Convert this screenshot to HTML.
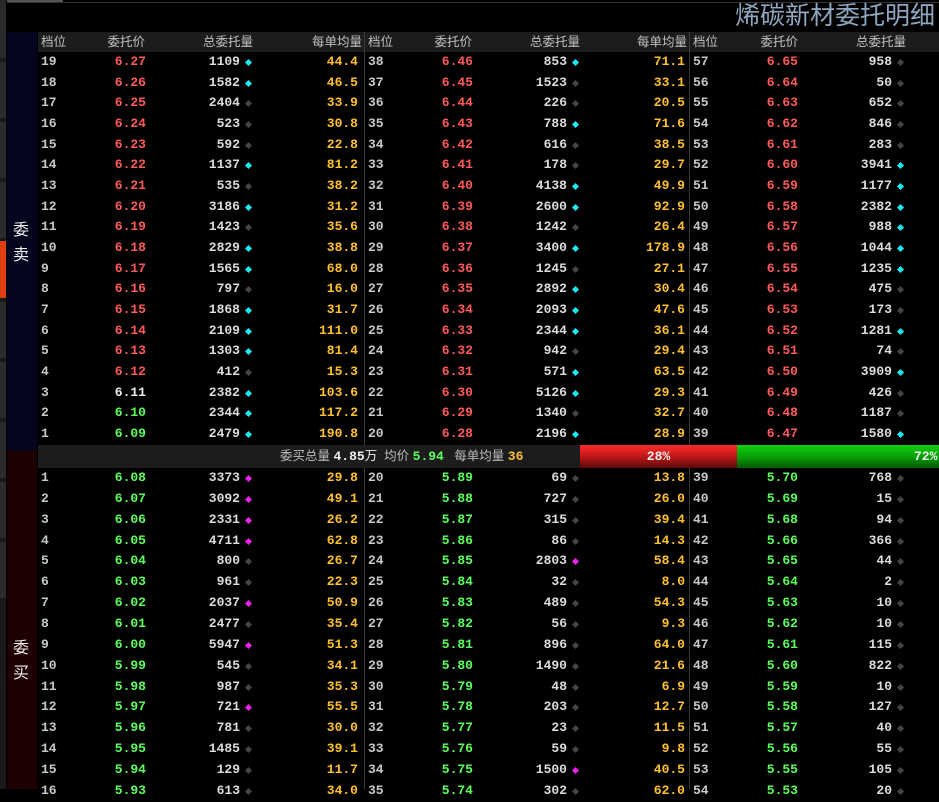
<!DOCTYPE html>
<html><head><meta charset="utf-8"><style>
*{margin:0;padding:0;box-sizing:border-box}
html,body{width:939px;height:789px}
body{background:#000;overflow:hidden;position:relative;font-family:"Liberation Sans","Noto Sans CJK SC",sans-serif;color:#ccc}
.abs{position:absolute}
.g{position:absolute;width:326px}
.r{position:relative;height:20.67px;font:bold 13px/20.67px "Liberation Mono",monospace}
.b .r{height:20.86px;line-height:20.86px}
.r span{position:absolute;top:0;white-space:nowrap}
.p{left:3px;color:#c8c8c8}
.pr{right:218px;color:#ff5a5a}
.G .pr{color:#5cff5c}
.t{right:124px;color:#dcdcdc}
.a{right:6px;color:#ffc030}
.r i{position:absolute;left:208px;top:8px;width:5px;height:5px;transform:rotate(45deg);background:#444}
.r i.c{background:#1ee8f0}
.r i.m{background:#f020f0}
.hd{position:absolute;top:32px;height:20px;background:#1c1c1c;left:38px;width:901px;font-size:12.5px;line-height:20px;color:#c0c0c0}
.hd span{position:absolute}
.vl{position:absolute;width:1px;background:#3a3a3a}
</style></head><body>
<div class="abs" style="left:0;top:0;width:6px;height:789px;background:#1a1a1a"></div>
<div class="abs" style="left:0;top:0;width:6px;height:58px;background:#2a2a2a"></div>
<div class="abs" style="left:0;top:62px;width:6px;height:56px;background:#2a2a2a"></div>
<div class="abs" style="left:0;top:122px;width:6px;height:56px;background:#2a2a2a"></div>
<div class="abs" style="left:0;top:182px;width:6px;height:56px;background:#2a2a2a"></div>
<div class="abs" style="left:0;top:241px;width:6px;height:57px;background:#e04010"></div>
<div class="abs" style="left:0;top:302px;width:6px;height:56px;background:#2a2a2a"></div>
<div class="abs" style="left:0;top:362px;width:6px;height:56px;background:#2a2a2a"></div>
<div class="abs" style="left:0;top:422px;width:6px;height:56px;background:#2a2a2a"></div>
<div class="abs" style="left:0;top:482px;width:6px;height:56px;background:#2a2a2a"></div>
<div class="abs" style="left:0;top:542px;width:6px;height:56px;background:#2a2a2a"></div>
<div class="abs" style="left:7px;top:0;width:56px;height:2px;background:#555"></div>
<div class="abs" style="left:7px;top:2px;width:932px;height:1px;background:#333"></div>
<div class="abs" style="right:4px;top:2px;font-size:25px;line-height:28px;color:#8ea6bf">烯碳新材委托明细</div>
<div class="abs" style="left:7px;top:32px;width:30px;height:419px;background:#05051e"></div>
<div class="abs" style="left:7px;top:451px;width:30px;height:338px;background:#1e0000"></div>
<div class="abs" style="left:13px;top:218px;font-size:16px;line-height:25px;color:#eee;width:18px">委<br>卖</div>
<div class="abs" style="left:13px;top:636px;font-size:16px;line-height:25px;color:#eee;width:18px">委<br>买</div>
<div class="hd">
<span style="left:3px">档位</span><span style="right:794px">委托价</span><span style="right:686px">总委托量</span><span style="right:577px">每单均量</span>
<span style="left:330px">档位</span><span style="right:467px">委托价</span><span style="right:359px">总委托量</span><span style="right:252px">每单均量</span>
<span style="left:655px">档位</span><span style="right:141px">委托价</span><span style="right:33px">总委托量</span>
</div>
<div class="vl" style="left:364px;top:32px;height:413px"></div>
<div class="vl" style="left:689px;top:32px;height:413px"></div>
<div class="vl" style="left:364px;top:467px;height:322px"></div>
<div class="vl" style="left:689px;top:467px;height:322px"></div>
<div class="g" style="left:38px;top:52px">
<div class="r"><span class="p">19</span><span class="pr">6.27</span><span class="t">1109</span><i class="c"></i><span class="a">44.4</span></div>
<div class="r"><span class="p">18</span><span class="pr">6.26</span><span class="t">1582</span><i class="c"></i><span class="a">46.5</span></div>
<div class="r"><span class="p">17</span><span class="pr">6.25</span><span class="t">2404</span><i></i><span class="a">33.9</span></div>
<div class="r"><span class="p">16</span><span class="pr">6.24</span><span class="t">523</span><i></i><span class="a">30.8</span></div>
<div class="r"><span class="p">15</span><span class="pr">6.23</span><span class="t">592</span><i></i><span class="a">22.8</span></div>
<div class="r"><span class="p">14</span><span class="pr">6.22</span><span class="t">1137</span><i class="c"></i><span class="a">81.2</span></div>
<div class="r"><span class="p">13</span><span class="pr">6.21</span><span class="t">535</span><i></i><span class="a">38.2</span></div>
<div class="r"><span class="p">12</span><span class="pr">6.20</span><span class="t">3186</span><i class="c"></i><span class="a">31.2</span></div>
<div class="r"><span class="p">11</span><span class="pr">6.19</span><span class="t">1423</span><i></i><span class="a">35.6</span></div>
<div class="r"><span class="p">10</span><span class="pr">6.18</span><span class="t">2829</span><i class="c"></i><span class="a">38.8</span></div>
<div class="r"><span class="p">9</span><span class="pr">6.17</span><span class="t">1565</span><i class="c"></i><span class="a">68.0</span></div>
<div class="r"><span class="p">8</span><span class="pr">6.16</span><span class="t">797</span><i></i><span class="a">16.0</span></div>
<div class="r"><span class="p">7</span><span class="pr">6.15</span><span class="t">1868</span><i class="c"></i><span class="a">31.7</span></div>
<div class="r"><span class="p">6</span><span class="pr">6.14</span><span class="t">2109</span><i class="c"></i><span class="a">111.0</span></div>
<div class="r"><span class="p">5</span><span class="pr">6.13</span><span class="t">1303</span><i class="c"></i><span class="a">81.4</span></div>
<div class="r"><span class="p">4</span><span class="pr">6.12</span><span class="t">412</span><i></i><span class="a">15.3</span></div>
<div class="r"><span class="p">3</span><span class="pr" style="color:#eee">6.11</span><span class="t">2382</span><i class="c"></i><span class="a">103.6</span></div>
<div class="r"><span class="p">2</span><span class="pr" style="color:#5cff5c">6.10</span><span class="t">2344</span><i class="c"></i><span class="a">117.2</span></div>
<div class="r"><span class="p">1</span><span class="pr" style="color:#5cff5c">6.09</span><span class="t">2479</span><i class="c"></i><span class="a">190.8</span></div>
</div>
<div class="g" style="left:365px;top:52px">
<div class="r"><span class="p">38</span><span class="pr">6.46</span><span class="t">853</span><i class="c"></i><span class="a">71.1</span></div>
<div class="r"><span class="p">37</span><span class="pr">6.45</span><span class="t">1523</span><i></i><span class="a">33.1</span></div>
<div class="r"><span class="p">36</span><span class="pr">6.44</span><span class="t">226</span><i></i><span class="a">20.5</span></div>
<div class="r"><span class="p">35</span><span class="pr">6.43</span><span class="t">788</span><i class="c"></i><span class="a">71.6</span></div>
<div class="r"><span class="p">34</span><span class="pr">6.42</span><span class="t">616</span><i></i><span class="a">38.5</span></div>
<div class="r"><span class="p">33</span><span class="pr">6.41</span><span class="t">178</span><i></i><span class="a">29.7</span></div>
<div class="r"><span class="p">32</span><span class="pr">6.40</span><span class="t">4138</span><i class="c"></i><span class="a">49.9</span></div>
<div class="r"><span class="p">31</span><span class="pr">6.39</span><span class="t">2600</span><i class="c"></i><span class="a">92.9</span></div>
<div class="r"><span class="p">30</span><span class="pr">6.38</span><span class="t">1242</span><i></i><span class="a">26.4</span></div>
<div class="r"><span class="p">29</span><span class="pr">6.37</span><span class="t">3400</span><i class="c"></i><span class="a">178.9</span></div>
<div class="r"><span class="p">28</span><span class="pr">6.36</span><span class="t">1245</span><i></i><span class="a">27.1</span></div>
<div class="r"><span class="p">27</span><span class="pr">6.35</span><span class="t">2892</span><i class="c"></i><span class="a">30.4</span></div>
<div class="r"><span class="p">26</span><span class="pr">6.34</span><span class="t">2093</span><i class="c"></i><span class="a">47.6</span></div>
<div class="r"><span class="p">25</span><span class="pr">6.33</span><span class="t">2344</span><i class="c"></i><span class="a">36.1</span></div>
<div class="r"><span class="p">24</span><span class="pr">6.32</span><span class="t">942</span><i></i><span class="a">29.4</span></div>
<div class="r"><span class="p">23</span><span class="pr">6.31</span><span class="t">571</span><i class="c"></i><span class="a">63.5</span></div>
<div class="r"><span class="p">22</span><span class="pr">6.30</span><span class="t">5126</span><i class="c"></i><span class="a">29.3</span></div>
<div class="r"><span class="p">21</span><span class="pr">6.29</span><span class="t">1340</span><i></i><span class="a">32.7</span></div>
<div class="r"><span class="p">20</span><span class="pr">6.28</span><span class="t">2196</span><i class="c"></i><span class="a">28.9</span></div>
</div>
<div class="g" style="left:690px;top:52px">
<div class="r"><span class="p">57</span><span class="pr">6.65</span><span class="t">958</span><i></i></div>
<div class="r"><span class="p">56</span><span class="pr">6.64</span><span class="t">50</span><i></i></div>
<div class="r"><span class="p">55</span><span class="pr">6.63</span><span class="t">652</span><i></i></div>
<div class="r"><span class="p">54</span><span class="pr">6.62</span><span class="t">846</span><i></i></div>
<div class="r"><span class="p">53</span><span class="pr">6.61</span><span class="t">283</span><i></i></div>
<div class="r"><span class="p">52</span><span class="pr">6.60</span><span class="t">3941</span><i class="c"></i></div>
<div class="r"><span class="p">51</span><span class="pr">6.59</span><span class="t">1177</span><i class="c"></i></div>
<div class="r"><span class="p">50</span><span class="pr">6.58</span><span class="t">2382</span><i class="c"></i></div>
<div class="r"><span class="p">49</span><span class="pr">6.57</span><span class="t">988</span><i class="c"></i></div>
<div class="r"><span class="p">48</span><span class="pr">6.56</span><span class="t">1044</span><i class="c"></i></div>
<div class="r"><span class="p">47</span><span class="pr">6.55</span><span class="t">1235</span><i class="c"></i></div>
<div class="r"><span class="p">46</span><span class="pr">6.54</span><span class="t">475</span><i></i></div>
<div class="r"><span class="p">45</span><span class="pr">6.53</span><span class="t">173</span><i></i></div>
<div class="r"><span class="p">44</span><span class="pr">6.52</span><span class="t">1281</span><i class="c"></i></div>
<div class="r"><span class="p">43</span><span class="pr">6.51</span><span class="t">74</span><i></i></div>
<div class="r"><span class="p">42</span><span class="pr">6.50</span><span class="t">3909</span><i class="c"></i></div>
<div class="r"><span class="p">41</span><span class="pr">6.49</span><span class="t">426</span><i></i></div>
<div class="r"><span class="p">40</span><span class="pr">6.48</span><span class="t">1187</span><i></i></div>
<div class="r"><span class="p">39</span><span class="pr">6.47</span><span class="t">1580</span><i class="c"></i></div>
</div>
<div class="abs" style="left:38px;top:445px;width:542px;height:23px;background:#1c1c1c;font-size:12.5px;line-height:23px;color:#bbb">
<span class="abs" style="left:242px">委买总量 <b style="color:#eee;font:bold 13px 'Liberation Mono',monospace">4.85</b><span style="color:#eee">万</span>&nbsp; 均价 <b style="color:#5cff5c;font:bold 13px 'Liberation Mono',monospace">5.94</b>&nbsp;&nbsp; 每单均量 <b style="color:#ffc030;font:bold 13px 'Liberation Mono',monospace">36</b></span>
</div>
<div class="abs" style="left:580px;top:445px;width:157px;height:23px;background:linear-gradient(#ff2a2a,#c01818 50%,#5a0808);color:#eee;font:bold 13px/23px 'Liberation Mono',monospace;text-align:center">28%</div>
<div class="abs" style="left:737px;top:445px;width:202px;height:23px;background:linear-gradient(#10d010,#08a008 50%,#045a04);color:#eee;font:bold 13px/23px 'Liberation Mono',monospace"><span class="abs" style="left:177px">72%</span></div>
<div class="g b G" style="left:38px;top:468px">
<div class="r"><span class="p">1</span><span class="pr">6.08</span><span class="t">3373</span><i class="m"></i><span class="a">29.8</span></div>
<div class="r"><span class="p">2</span><span class="pr">6.07</span><span class="t">3092</span><i class="m"></i><span class="a">49.1</span></div>
<div class="r"><span class="p">3</span><span class="pr">6.06</span><span class="t">2331</span><i class="m"></i><span class="a">26.2</span></div>
<div class="r"><span class="p">4</span><span class="pr">6.05</span><span class="t">4711</span><i class="m"></i><span class="a">62.8</span></div>
<div class="r"><span class="p">5</span><span class="pr">6.04</span><span class="t">800</span><i></i><span class="a">26.7</span></div>
<div class="r"><span class="p">6</span><span class="pr">6.03</span><span class="t">961</span><i></i><span class="a">22.3</span></div>
<div class="r"><span class="p">7</span><span class="pr">6.02</span><span class="t">2037</span><i class="m"></i><span class="a">50.9</span></div>
<div class="r"><span class="p">8</span><span class="pr">6.01</span><span class="t">2477</span><i></i><span class="a">35.4</span></div>
<div class="r"><span class="p">9</span><span class="pr">6.00</span><span class="t">5947</span><i class="m"></i><span class="a">51.3</span></div>
<div class="r"><span class="p">10</span><span class="pr">5.99</span><span class="t">545</span><i></i><span class="a">34.1</span></div>
<div class="r"><span class="p">11</span><span class="pr">5.98</span><span class="t">987</span><i></i><span class="a">35.3</span></div>
<div class="r"><span class="p">12</span><span class="pr">5.97</span><span class="t">721</span><i class="m"></i><span class="a">55.5</span></div>
<div class="r"><span class="p">13</span><span class="pr">5.96</span><span class="t">781</span><i></i><span class="a">30.0</span></div>
<div class="r"><span class="p">14</span><span class="pr">5.95</span><span class="t">1485</span><i></i><span class="a">39.1</span></div>
<div class="r"><span class="p">15</span><span class="pr">5.94</span><span class="t">129</span><i></i><span class="a">11.7</span></div>
<div class="r"><span class="p">16</span><span class="pr">5.93</span><span class="t">613</span><i></i><span class="a">34.0</span></div>
</div>
<div class="g b G" style="left:365px;top:468px">
<div class="r"><span class="p">20</span><span class="pr">5.89</span><span class="t">69</span><i></i><span class="a">13.8</span></div>
<div class="r"><span class="p">21</span><span class="pr">5.88</span><span class="t">727</span><i></i><span class="a">26.0</span></div>
<div class="r"><span class="p">22</span><span class="pr">5.87</span><span class="t">315</span><i></i><span class="a">39.4</span></div>
<div class="r"><span class="p">23</span><span class="pr">5.86</span><span class="t">86</span><i></i><span class="a">14.3</span></div>
<div class="r"><span class="p">24</span><span class="pr">5.85</span><span class="t">2803</span><i class="m"></i><span class="a">58.4</span></div>
<div class="r"><span class="p">25</span><span class="pr">5.84</span><span class="t">32</span><i></i><span class="a">8.0</span></div>
<div class="r"><span class="p">26</span><span class="pr">5.83</span><span class="t">489</span><i></i><span class="a">54.3</span></div>
<div class="r"><span class="p">27</span><span class="pr">5.82</span><span class="t">56</span><i></i><span class="a">9.3</span></div>
<div class="r"><span class="p">28</span><span class="pr">5.81</span><span class="t">896</span><i></i><span class="a">64.0</span></div>
<div class="r"><span class="p">29</span><span class="pr">5.80</span><span class="t">1490</span><i></i><span class="a">21.6</span></div>
<div class="r"><span class="p">30</span><span class="pr">5.79</span><span class="t">48</span><i></i><span class="a">6.9</span></div>
<div class="r"><span class="p">31</span><span class="pr">5.78</span><span class="t">203</span><i></i><span class="a">12.7</span></div>
<div class="r"><span class="p">32</span><span class="pr">5.77</span><span class="t">23</span><i></i><span class="a">11.5</span></div>
<div class="r"><span class="p">33</span><span class="pr">5.76</span><span class="t">59</span><i></i><span class="a">9.8</span></div>
<div class="r"><span class="p">34</span><span class="pr">5.75</span><span class="t">1500</span><i class="m"></i><span class="a">40.5</span></div>
<div class="r"><span class="p">35</span><span class="pr">5.74</span><span class="t">302</span><i></i><span class="a">62.0</span></div>
</div>
<div class="g b G" style="left:690px;top:468px">
<div class="r"><span class="p">39</span><span class="pr">5.70</span><span class="t">768</span><i></i></div>
<div class="r"><span class="p">40</span><span class="pr">5.69</span><span class="t">15</span><i></i></div>
<div class="r"><span class="p">41</span><span class="pr">5.68</span><span class="t">94</span><i></i></div>
<div class="r"><span class="p">42</span><span class="pr">5.66</span><span class="t">366</span><i></i></div>
<div class="r"><span class="p">43</span><span class="pr">5.65</span><span class="t">44</span><i></i></div>
<div class="r"><span class="p">44</span><span class="pr">5.64</span><span class="t">2</span><i></i></div>
<div class="r"><span class="p">45</span><span class="pr">5.63</span><span class="t">10</span><i></i></div>
<div class="r"><span class="p">46</span><span class="pr">5.62</span><span class="t">10</span><i></i></div>
<div class="r"><span class="p">47</span><span class="pr">5.61</span><span class="t">115</span><i></i></div>
<div class="r"><span class="p">48</span><span class="pr">5.60</span><span class="t">822</span><i></i></div>
<div class="r"><span class="p">49</span><span class="pr">5.59</span><span class="t">10</span><i></i></div>
<div class="r"><span class="p">50</span><span class="pr">5.58</span><span class="t">127</span><i></i></div>
<div class="r"><span class="p">51</span><span class="pr">5.57</span><span class="t">40</span><i></i></div>
<div class="r"><span class="p">52</span><span class="pr">5.56</span><span class="t">55</span><i></i></div>
<div class="r"><span class="p">53</span><span class="pr">5.55</span><span class="t">105</span><i></i></div>
<div class="r"><span class="p">54</span><span class="pr">5.53</span><span class="t">20</span><i></i></div>
</div>
</body></html>
